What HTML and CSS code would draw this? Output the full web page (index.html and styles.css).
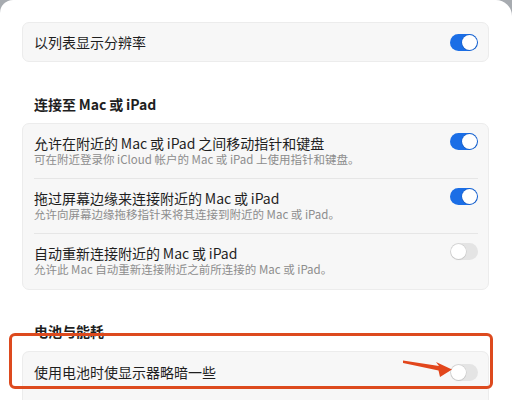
FILE: index.html
```html
<!DOCTYPE html>
<html>

<head>
    <title>显示器设置</title>
    <link rel="stylesheet" href="styles.css">
</head>

<body>
    <div class="window">
        <!-- Resolution list -->
        <div class="card">
            <div class="row single">
                <div class="text">
                    <div class="title">以列表显示分辨率</div>
                </div>
                <span class="toggle on"></span>
            </div>
        </div>

        <!-- Continuity -->
        <h2>连接至&thinsp;Mac&thinsp;或&thinsp;iPad</h2>
        <div class="card">
            <div class="row">
                <div class="text">
                    <div class="title">允许在附近的&thinsp;Mac&thinsp;或&thinsp;iPad&thinsp;之间移动指针和键盘</div>
                    <div class="sub">可在附近登录你 iCloud 帐户的 Mac 或 iPad 上使用指针和键盘。</div>
                </div>
                <span class="toggle on"></span>
            </div>
            <div class="row">
                <div class="text">
                    <div class="title">拖过屏幕边缘来连接附近的&thinsp;Mac&thinsp;或&thinsp;iPad</div>
                    <div class="sub">允许向屏幕边缘拖移指针来将其连接到附近的 Mac 或 iPad。</div>
                </div>
                <span class="toggle on"></span>
            </div>
            <div class="row">
                <div class="text">
                    <div class="title">自动重新连接附近的&thinsp;Mac&thinsp;或&thinsp;iPad</div>
                    <div class="sub">允许此 Mac 自动重新连接附近之前所连接的 Mac 或 iPad。</div>
                </div>
                <span class="toggle"></span>
            </div>
        </div>

        <!-- Battery -->
        <h2 class="battery">电池与能耗</h2>
        <div class="card tall">
            <div class="row single">
                <div class="text">
                    <div class="title">使用电池时使显示器略暗一些</div>
                </div>
                <span class="toggle"></span>
            </div>
        </div>

        <!-- annotation -->
        <div class="highlight"></div>
        <svg class="arrow" width="56" height="26" viewBox="0 0 56 26">
            <polygon points="3,5.5 39,11 36,7 52,14.5 40,22 38.5,15.5 3,8" fill="#e2461c" />
        </svg>
    </div>
</body>

</html>
```

FILE: styles.css
```css
* {
    margin: 0;
    padding: 0;
    box-sizing: border-box;
}

body {
    font-family: 'Noto Sans CJK SC', 'Inter', sans-serif;
    background-color: #a7abb0;
    color: #1f1f1f;
    width: 512px;
    height: 400px;
    overflow: hidden;
}

.window {
    position: relative;
    background: #ffffff;
    height: 400px;
    border-radius: 13px 16px 0 0;
    padding: 22px 23px 0 22px;
}

.card {
    background: #f7f7f7;
    border: 1px solid #ececec;
    border-radius: 7px;
}

.card.tall {
    height: 60px;
    border-bottom: none;
    border-radius: 7px 7px 0 0;
}

.row {
    display: flex;
    align-items: flex-start;
    justify-content: space-between;
    margin: 0 10px 0 11px;
    padding: 10px 0 12px;
    height: 55px;
    border-bottom: 1px solid #e6e6e6;
}

.row:last-child {
    border-bottom: none;
}

.row.single {
    height: 38px;
    padding: 0;
    align-items: center;
}

.card.tall .row.single {
    height: 40px;
}

.title {
    font-size: 14px;
    line-height: 18px;
    color: #1f1f1f;
}

.sub {
    font-size: 11.5px;
    line-height: 14px;
    color: #8d8d8d;
}

h2 {
    font-size: 14px;
    font-weight: 700;
    line-height: 20px;
    margin: 32px 0 9px 12px;
    color: #1f1f1f;
}

h2.battery {
    margin: 31px 0 10px 12px;
}

.toggle {
    position: relative;
    flex-shrink: 0;
    width: 28px;
    height: 17px;
    border-radius: 9px;
    background: #e4e4e4;
}

.row:not(.single) .toggle {
    margin-top: -1px;
}

.toggle::after {
    content: '';
    position: absolute;
    top: 1px;
    left: 1px;
    width: 15px;
    height: 15px;
    border-radius: 50%;
    background: #ffffff;
    box-shadow: 0 0 0 0.5px #c8c8c8, 0 1px 1px rgba(0, 0, 0, 0.12);
}

.toggle.on {
    background: #1b6ee6;
}

.toggle.on::after {
    left: 12px;
    box-shadow: 0 0 0 0.5px #1559bd;
}

.highlight {
    position: absolute;
    left: 9px;
    top: 333px;
    width: 484px;
    height: 56px;
    border: 3px solid #dd4a1e;
    border-radius: 6px;
    pointer-events: none;
}

.arrow {
    position: absolute;
    left: 400px;
    top: 355px;
}
```
